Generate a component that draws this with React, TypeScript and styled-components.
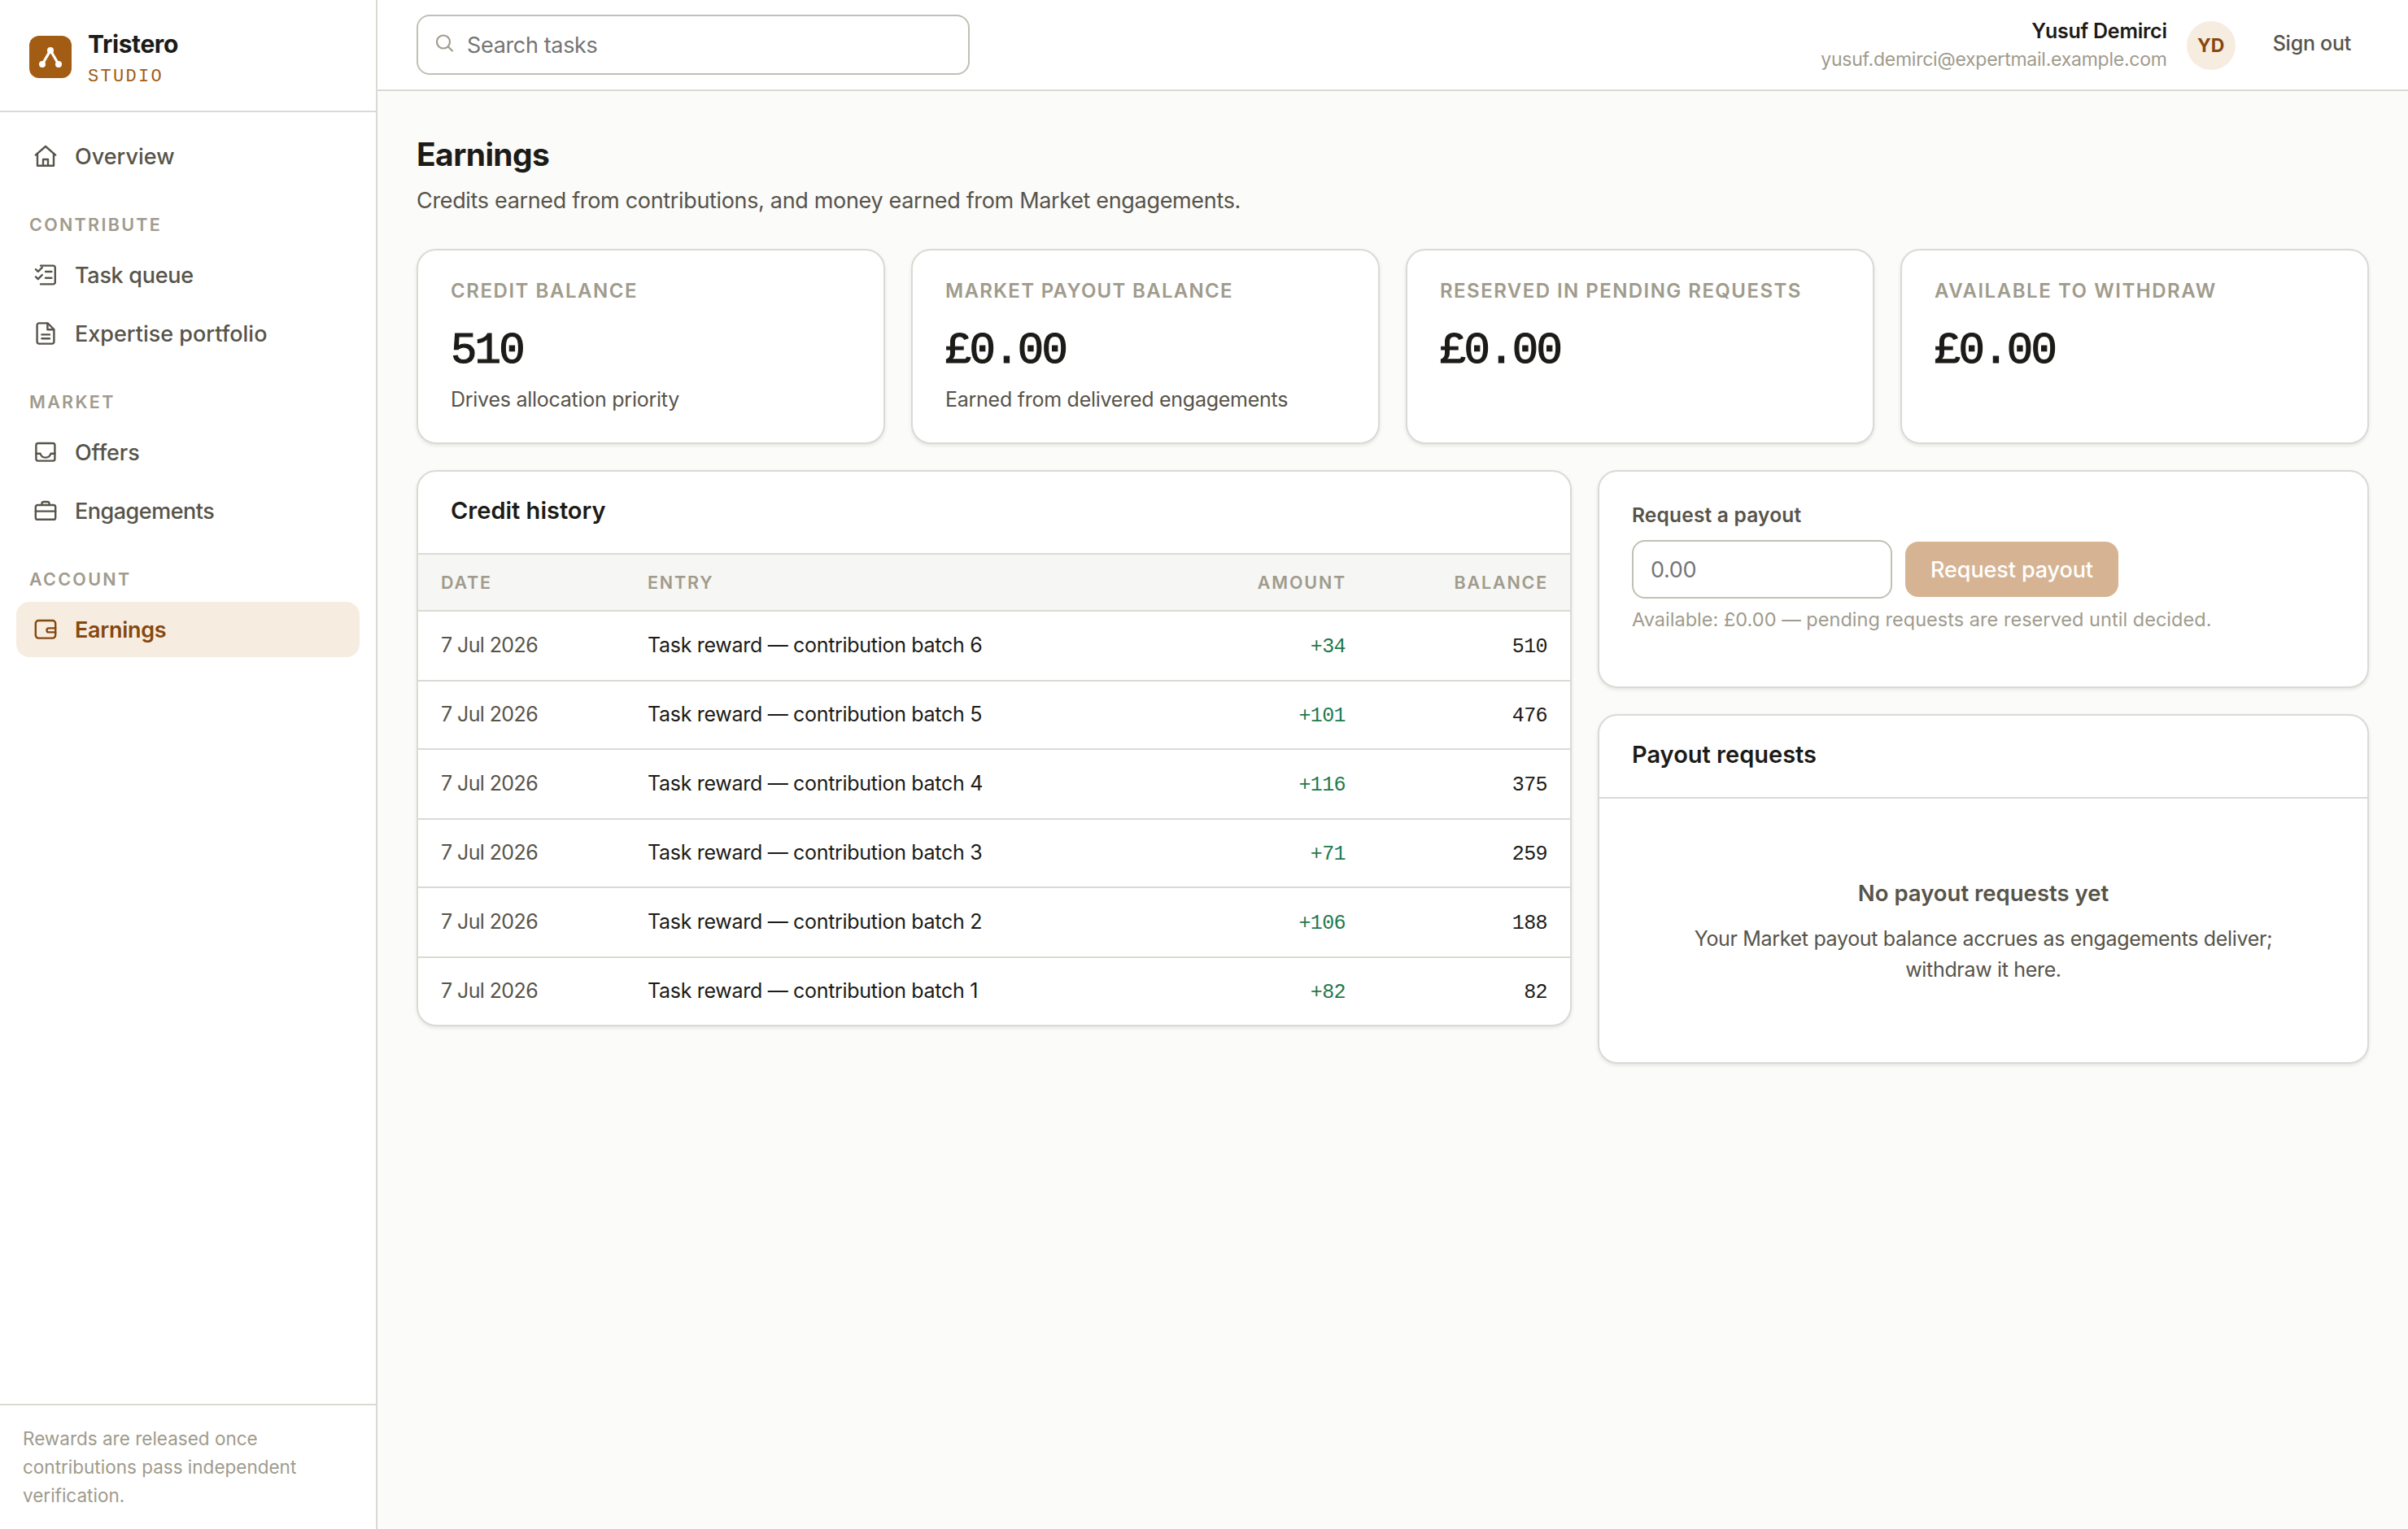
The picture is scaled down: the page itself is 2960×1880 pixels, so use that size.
import styled, { createGlobalStyle } from 'styled-components';

const sans = `Inter, 'Liberation Sans', sans-serif`;
const mono = `'Liberation Mono', monospace`;

const GlobalStyle = createGlobalStyle`
  * {
    box-sizing: border-box;
  }
  body {
    margin: 0;
    background-color: #fbfbf9;
    color: #1c1b18;
    font-family: ${sans};
    font-size: 27px;
    -webkit-font-smoothing: antialiased;
  }
  h1, h2, p {
    margin: 0;
  }
`;

const Page = styled.div`
  display: flex;
  height: 1880px;
`;
const Sidebar = styled.aside`
  display: flex;
  flex-direction: column;
  width: 464px;
  background-color: #fff;
  border-right: 2px solid #dadad5;
`;
const Brand = styled.div`
  display: flex;
  align-items: center;
  gap: 20px;
  height: 138px;
  padding: 4px 36px 0;
  border-bottom: 2px solid #dadad5;
`;
const BrandText = styled.div`
  margin-top: 10px;
`;
const BrandName = styled.div`
  font-size: 30px;
  line-height: 40px;
  font-weight: 700;
  letter-spacing: -0.4px;
`;
const BrandSub = styled.div`
  color: #a35c14;
  font-family: ${mono};
  font-size: 22px;
  line-height: 42px;
  letter-spacing: 2.3px;
`;
const Nav = styled.nav`
  display: flex;
  flex-direction: column;
  flex: 1;
  gap: 4px;
  padding: 20px;
`;
const NavLabel = styled.div`
  height: 70px;
  padding: 33px 16px 0;
  color: #a09b8c;
  font-size: 21.5px;
  line-height: 26px;
  font-weight: 600;
  letter-spacing: 2.3px;
`;
const NavItem = styled.a<{ $active?: boolean }>`
  display: flex;
  align-items: center;
  gap: 20px;
  height: 68px;
  padding: 0 20px;
  border-radius: 16px;
  color: ${(props) => (props.$active ? '#85480f' : '#57544a')};
  background-color: ${(props) => (props.$active ? '#f7ece0' : 'transparent')};
  font-weight: ${(props) => (props.$active ? 600 : 500)};
`;
const NavText = styled.span<{ $spacing: number }>`
  letter-spacing: ${(props) => props.$spacing}px;
`;
const SidebarNote = styled.p`
  height: 154px;
  padding: 23px 28px;
  border-top: 2px solid #dadad5;
  color: #a09b8c;
  font-size: 22.5px;
  line-height: 35px;
`;

const Main = styled.div`
  flex: 1;
`;
const Header = styled.header`
  display: flex;
  align-items: center;
  height: 112px;
  padding: 0 48px;
  background-color: #fff;
  border-bottom: 2px solid #dadad5;
`;
const SearchBox = styled.label`
  display: flex;
  align-items: center;
  gap: 12px;
  width: 680px;
  height: 74px;
  margin-right: auto;
  padding: 0 20px;
  border: 2px solid #c2bfb5;
  border-radius: 16px;
`;
const SearchInput = styled.input`
  flex: 1;
  padding: 0;
  border: none;
  outline: none;
  background: none;
  font-family: ${sans};
  font-size: 27px;
  letter-spacing: -0.35px;
  &::placeholder {
    color: #757575;
  }
`;
const UserInfo = styled.div`
  margin-right: 24px;
  text-align: right;
`;
const UserName = styled.div`
  font-size: 25px;
  line-height: 35px;
  font-weight: 600;
  letter-spacing: -0.25px;
`;
const UserMail = styled.div`
  color: #a09b8c;
  font-size: 23px;
  line-height: 34px;
  letter-spacing: -0.24px;
`;
const Avatar = styled.div`
  width: 60px;
  height: 60px;
  margin-top: 2px;
  border-radius: 50%;
  background-color: #f7ece0;
  color: #85480f;
  font-size: 23px;
  line-height: 60px;
  font-weight: 700;
  text-align: center;
`;
const SignOut = styled.button`
  margin-left: 24px;
  padding: 0 22px 4px;
  border: none;
  background: none;
  color: #57544a;
  font-family: ${sans};
  font-size: 25px;
  font-weight: 500;
  letter-spacing: -0.25px;
`;

const Content = styled.main`
  padding: 52px 48px;
`;
const Title = styled.h1`
  font-size: 39px;
  line-height: 52px;
  font-weight: 700;
  letter-spacing: -0.6px;
`;
const Subtitle = styled.p`
  margin-top: 10px;
  margin-bottom: 38px;
  color: #57544a;
  line-height: 42px;
  letter-spacing: -0.335px;
`;
const Stats = styled.div`
  display: grid;
  grid-template-columns: repeat(4, 1fr);
  gap: 32px;
  margin-bottom: 32px;
`;
const Card = styled.section`
  overflow: hidden;
  background-color: #fff;
  border: 2px solid #dadad5;
  border-radius: 24px;
  box-shadow: 0 2px 4px rgba(28, 27, 24, 0.1);
`;
const StatCard = styled(Card)`
  height: 240px;
  padding: 32px 40px 0;
`;
const StatLabel = styled.div<{ $spacing: number }>`
  color: #a09b8c;
  font-size: 24px;
  line-height: 36px;
  font-weight: 600;
  letter-spacing: ${(props) => props.$spacing}px;
  white-space: nowrap;
`;
/* a thin stroke gives the figures a medium weight */
const StatValue = styled.div`
  margin-top: 26px;
  font-family: ${mono};
  font-size: 54px;
  line-height: 60px;
  letter-spacing: -2.8px;
  -webkit-text-stroke: 1.2px #1c1b18;
`;
const StatHint = styled.div`
  margin-top: 10px;
  color: #57544a;
  font-size: 25px;
  line-height: 38px;
  letter-spacing: -0.26px;
`;
const Columns = styled.div`
  display: grid;
  grid-template-columns: 1420px 1fr;
  align-items: start;
  gap: 32px;
`;
const Side = styled.div`
  display: flex;
  flex-direction: column;
  gap: 32px;
`;
const CardHead = styled.h2`
  height: 102px;
  padding: 27px 40px 0;
  border-bottom: 2px solid #dadad5;
  font-size: 29px;
  line-height: 42px;
  font-weight: 600;
`;
const Table = styled.table`
  width: 100%;
  border-collapse: separate;
  border-spacing: 0;
  table-layout: fixed;
`;
const Th = styled.th<{ $right?: boolean; $width?: number }>`
  width: ${(props) => (props.$width ? `${props.$width}px` : 'auto')};
  height: 70px;
  padding: 0 ${(props) => (props.$right ? 27 : 28)}px 0 28px;
  border-bottom: 2px solid #dadad5;
  background-color: #f6f6f4;
  color: #a09b8c;
  font-size: 21.5px;
  font-weight: 600;
  letter-spacing: 1.8px;
  text-align: ${(props) => (props.$right ? 'right' : 'left')};
`;
const Row = styled.tr`
  height: 86px;
  &:nth-child(even) {
    height: 84px;
  }
  &:last-child {
    height: 82px;
  }
  &:last-child td {
    border-bottom: none;
  }
`;
const Td = styled.td<{ $muted?: boolean }>`
  padding: 0 28px 2px;
  border-bottom: 2px solid #dadad5;
  color: ${(props) => (props.$muted ? '#57544a' : '#1c1b18')};
  font-size: 25px;
  letter-spacing: ${(props) => (props.$muted ? '-0.6px' : '-0.3px')};
`;
const NumTd = styled(Td)<{ $gain?: boolean }>`
  padding-top: 2px;
  padding-bottom: 0;
  color: ${(props) => (props.$gain ? '#1f7a4d' : '#1c1b18')};
  font-family: ${mono};
  letter-spacing: -0.6px;
  text-align: right;
`;
const PayoutCard = styled(Card)`
  height: 268px;
  padding: 35px 40px;
`;
const FieldLabel = styled.label`
  display: block;
  color: #57544a;
  font-size: 24.5px;
  line-height: 36px;
  font-weight: 600;
  letter-spacing: 0.2px;
`;
const PayoutForm = styled.div`
  display: flex;
  align-items: center;
  gap: 16px;
  margin: 13px 0 8px;
`;
const AmountInput = styled.input`
  width: 320px;
  height: 72px;
  padding: 0 21px;
  border: 2px solid #c2bfb5;
  border-radius: 16px;
  font-family: ${sans};
  font-size: 27px;
  letter-spacing: -0.3px;
  &::placeholder {
    color: #757575;
  }
`;
const PayoutButton = styled.button`
  width: 262px;
  height: 68px;
  padding: 0;
  border: none;
  border-radius: 16px;
  background-color: #d6b493;
  color: #fff;
  font-family: ${sans};
  font-size: 27px;
  font-weight: 500;
  letter-spacing: -0.1px;
`;
const FieldHint = styled.p`
  color: #a09b8c;
  font-size: 23.5px;
  line-height: 36px;
  letter-spacing: 0.03px;
`;
const Empty = styled.div`
  height: 324px;
  padding: 95px 80px 0;
  color: #57544a;
  text-align: center;
`;
const EmptyTitle = styled.div`
  margin-bottom: 16px;
  font-size: 27.5px;
  line-height: 42px;
  font-weight: 600;
`;
const EmptyText = styled.p`
  font-size: 25px;
  line-height: 38px;
  letter-spacing: -0.33px;
`;

const icons: any = {
  home: (
    <>
      <path d="M1.9 7.3 8 2l6.1 5.3" />
      <path d="M3 6.5v7.4h10V6.5" />
      <path d="M6.5 13.9V10h3v3.9" />
    </>
  ),
  tasks: (
    <>
      <path d="M5 2.3h7.7a1.2 1.2 0 0 1 1.2 1.2v9a1.2 1.2 0 0 1-1.2 1.2H5" />
      <path d="m2 4.6 1.4 1.4 2.5-2.6M2 9.2l1.4 1.4L5.9 8" />
      <path d="M8 6h3.7M8 9.9h3.7" />
    </>
  ),
  file: (
    <>
      <path d="M9.3 1.7H4a1.2 1.2 0 0 0-1.2 1.2v10.2A1.2 1.2 0 0 0 4 14.3h8a1.2 1.2 0 0 0 1.2-1.2V5.5z" />
      <path d="M9.2 1.9v3.7H13" />
      <path d="M5.7 8.7h4.8M5.7 11.1h4.8" />
    </>
  ),
  inbox: (
    <>
      <rect x="2.2" y="2.5" width="11.5" height="10.8" rx="1.2" />
      <path d="M2.2 8.9h2.6c.4 1.6 1.5 2.4 3.2 2.4s2.8-.8 3.2-2.4h2.5" />
    </>
  ),
  briefcase: (
    <>
      <rect x="1.9" y="4.5" width="12.2" height="8.9" rx="1.2" />
      <path d="M5.7 4.4v-.7a1.2 1.2 0 0 1 1.2-1.2h2.2a1.2 1.2 0 0 1 1.2 1.2v.7M1.9 8.3h12.2" />
    </>
  ),
  wallet: (
    <>
      <rect x="1.9" y="2.5" width="12.2" height="10.8" rx="1.8" />
      <path d="M14.1 7.2H10a1.2 1.2 0 0 0 0 2.500h4.1" />
    </>
  ),
};

const navGroups = [
  { items: [{ icon: 'home', text: 'Overview', spacing: 0 }] },
  {
    label: 'CONTRIBUTE',
    items: [
      { icon: 'tasks', text: 'Task queue', spacing: -0.3 },
      { icon: 'file', text: 'Expertise portfolio', spacing: 0 },
    ],
  },
  {
    label: 'MARKET',
    items: [
      { icon: 'inbox', text: 'Offers', spacing: -0.1 },
      { icon: 'briefcase', text: 'Engagements', spacing: -0.5 },
    ],
  },
  {
    label: 'ACCOUNT',
    items: [{ icon: 'wallet', text: 'Earnings', spacing: -0.3, active: true }],
  },
];

const stats = [
  { label: 'CREDIT BALANCE', value: '510', hint: 'Drives allocation priority', spacing: 1.55 },
  { label: 'MARKET PAYOUT BALANCE', value: '£0.00', hint: 'Earned from delivered engagements', spacing: 1.3 },
  { label: 'RESERVED IN PENDING REQUESTS', value: '£0.00', spacing: 1.45 },
  { label: 'AVAILABLE TO WITHDRAW', value: '£0.00', spacing: 1.55 },
];

const history = [
  { batch: 6, amount: '+34', balance: 510 },
  { batch: 5, amount: '+101', balance: 476 },
  { batch: 4, amount: '+116', balance: 375 },
  { batch: 3, amount: '+71', balance: 259 },
  { batch: 2, amount: '+106', balance: 188 },
  { batch: 1, amount: '+82', balance: 82 },
];

const NavIcon = ({ name }: { name: string }) => (
  <svg
    width="32"
    height="32"
    viewBox="0 0 16 16"
    fill="none"
    stroke="currentColor"
    strokeWidth="1.2"
    strokeLinecap="round"
    strokeLinejoin="round"
  >
    {icons[name]}
  </svg>
);

const Logo = () => (
  <svg width="52" height="52" viewBox="0 0 52 52">
    <rect width="52" height="52" rx="12" fill="#a35c14" />
    <path d="M16 35 26 18l10 17" fill="none" stroke="#fff" strokeWidth="3.2" />
    <circle cx="26" cy="18" r="4" fill="#fff" />
    <circle cx="16" cy="35" r="4" fill="#fff" />
    <circle cx="36" cy="35" r="4" fill="#fff" />
  </svg>
);

export default function App() {
  return (
    <Page>
      <GlobalStyle />
      <Sidebar>
        <Brand>
          <Logo />
          <BrandText>
            <BrandName>Tristero</BrandName>
            <BrandSub>STUDIO</BrandSub>
          </BrandText>
        </Brand>
        <Nav>
          {navGroups.map((group: any, idx: number) => [
            group.label && <NavLabel key={group.label}>{group.label}</NavLabel>,
            ...group.items.map((el: any) => (
              <NavItem key={`${idx}-${el.text}`} $active={el.active}>
                <NavIcon name={el.icon} />
                <NavText $spacing={el.spacing}>{el.text}</NavText>
              </NavItem>
            )),
          ])}
        </Nav>
        <SidebarNote>
          Rewards are released once contributions pass independent verification.
        </SidebarNote>
      </Sidebar>
      <Main>
        <Header>
          <SearchBox>
            <svg width="28" height="28" viewBox="0 0 28 28" fill="none" stroke="#a09b8c" strokeWidth="2.2" strokeLinecap="round">
              <circle cx="11" cy="10.5" r="8" />
              <path d="m17 16.5 5 5" />
            </svg>
            <SearchInput placeholder="Search tasks" />
          </SearchBox>
          <UserInfo>
            <UserName>Yusuf Demirci</UserName>
            <UserMail>yusuf.demirci@expertmail.example.com</UserMail>
          </UserInfo>
          <Avatar>YD</Avatar>
          <SignOut>Sign out</SignOut>
        </Header>
        <Content>
          <Title>Earnings</Title>
          <Subtitle>
            Credits earned from contributions, and money earned from Market engagements.
          </Subtitle>
          <Stats>
            {stats.map((el: any) => (
              <StatCard key={el.label}>
                <StatLabel $spacing={el.spacing}>{el.label}</StatLabel>
                <StatValue>{el.value}</StatValue>
                {el.hint && <StatHint>{el.hint}</StatHint>}
              </StatCard>
            ))}
          </Stats>
          <Columns>
            <Card>
              <CardHead>Credit history</CardHead>
              <Table>
                <thead>
                  <tr>
                    <Th $width={254}>DATE</Th>
                    <Th>ENTRY</Th>
                    <Th $right $width={240}>AMOUNT</Th>
                    <Th $right $width={248}>BALANCE</Th>
                  </tr>
                </thead>
                <tbody>
                  {history.map((el: any) => (
                    <Row key={el.batch}>
                      <Td $muted>7 Jul 2026</Td>
                      <Td>Task reward — contribution batch {el.batch}</Td>
                      <NumTd $gain>{el.amount}</NumTd>
                      <NumTd>{el.balance}</NumTd>
                    </Row>
                  ))}
                </tbody>
              </Table>
            </Card>
            <Side>
              <PayoutCard>
                <FieldLabel htmlFor="amount">Request a payout</FieldLabel>
                <PayoutForm>
                  <AmountInput id="amount" placeholder="0.00" />
                  <PayoutButton disabled>Request payout</PayoutButton>
                </PayoutForm>
                <FieldHint>
                  Available: £0.00 — pending requests are reserved until decided.
                </FieldHint>
              </PayoutCard>
              <Card>
                <CardHead>Payout requests</CardHead>
                <Empty>
                  <EmptyTitle>No payout requests yet</EmptyTitle>
                  <EmptyText>
                    Your Market payout balance accrues as engagements deliver;
                    <br />
                    withdraw it here.
                  </EmptyText>
                </Empty>
              </Card>
            </Side>
          </Columns>
        </Content>
      </Main>
    </Page>
  );
}
